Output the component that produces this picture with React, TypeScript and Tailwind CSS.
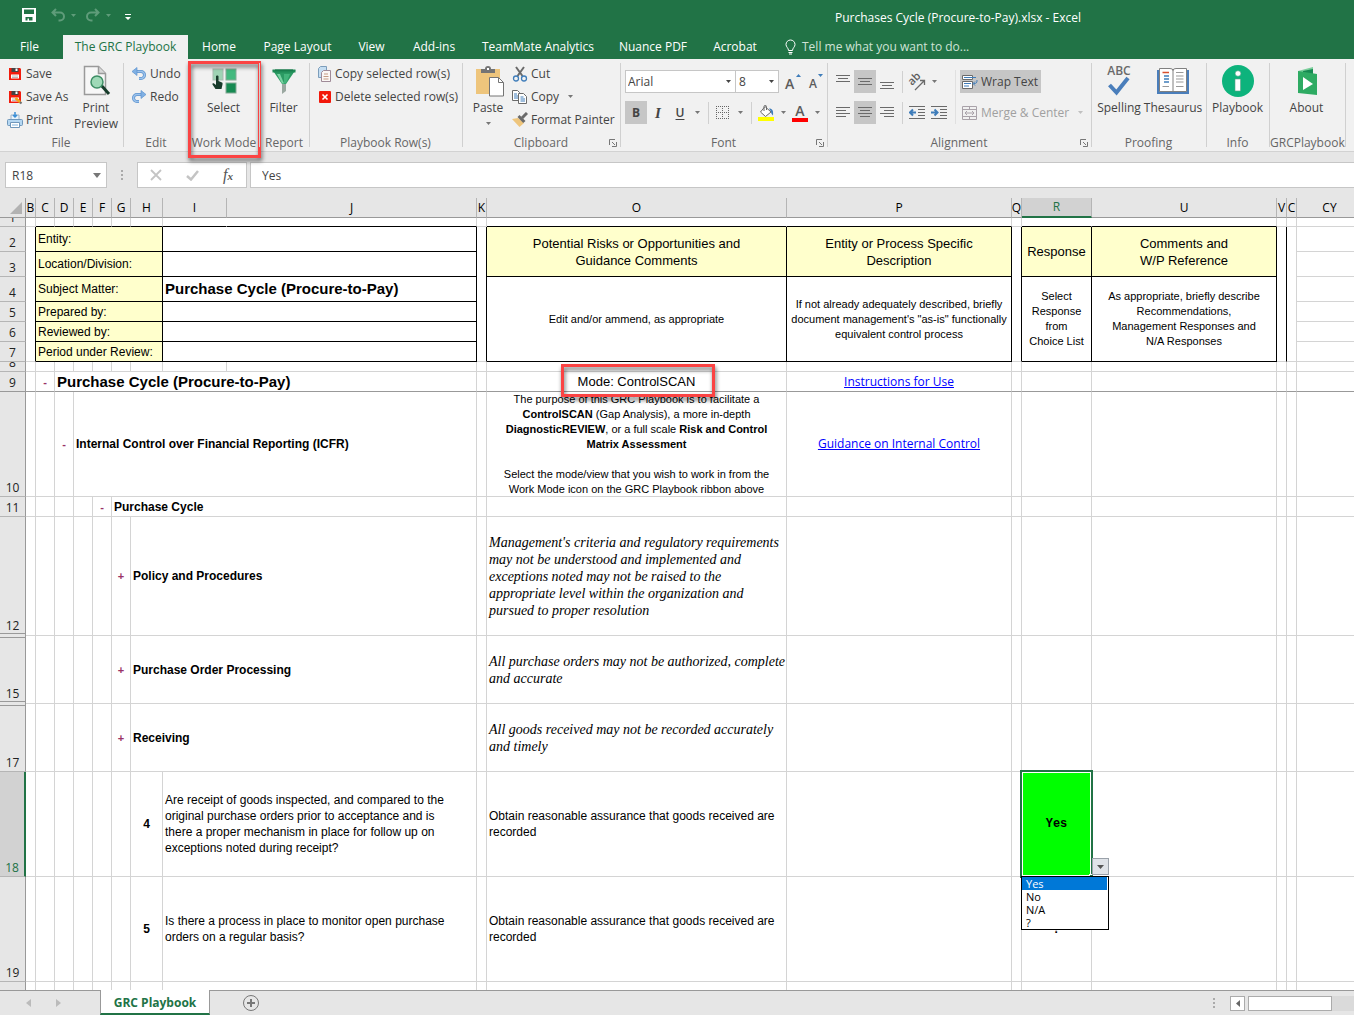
import React from 'react'

type Kids = { children?: React.ReactNode; className?: string }

const ui = "font-['Open_Sans','Noto_Sans',sans-serif]"
const line = 'border-[#d4d4d4]'
const label = 'bg-[#ffffcc]'

/* ---------- icons ---------- */

const Caret = ({ className = '' }: { className?: string }) => (
    <svg className={`shrink-0 ${className}`} width="5" height="3" viewBox="0 0 5 3" fill="currentColor"><path d="M0 0h5L2.5 3z" /></svg>
)

const Floppy = ({ edit = false }: { edit?: boolean }) => (
    <svg width="16" height="16" viewBox="0 0 16 16">
        <path d="M2 2h11l1 1v11H2z" fill="#f21c0d" />
        <path d="M4.500 2h7v4h-7z" fill="#444" />
        <path d="M8.500 2.500h2V5h-2z" fill="#fff" />
        <path d="M4 8.500h8v4H4z" fill="#fff" />
        <path d="M5 10h6M5 11.500h6" stroke="#bbb" />
        {edit && <path d="M8.500 9l5 4.500" stroke="#f6a21d" strokeWidth="2.500" />}
        {edit && <path d="M13 13l1.500 1.500" stroke="#6c6c6c" strokeWidth="2" />}
    </svg>
)

const Printer = () => (
    <svg width="16" height="16" viewBox="0 0 16 16">
        <path d="M4 3h8v5H4z" fill="#e8f3fb" stroke="#9fb4c7" />
        <path d="M8 0v5M6 3l2 2 2-2" stroke="#3b8fd6" fill="none" strokeWidth="1.500" />
        <rect x=".5" y="7.500" width="15" height="6" rx="1" fill="#b5d7f2" stroke="#6f97bb" />
        <path d="M3.500 10.500h9v5h-9z" fill="#fff" stroke="#6f97bb" />
        <path d="M5 13h6" stroke="#7fb2dd" />
    </svg>
)

const PrintPreview = () => (
    <svg width="32" height="32" viewBox="0 0 32 32">
        <path d="M4.500 1.500h14l7 7v21h-21z" fill="#f7f7f7" stroke="#9a9a9a" strokeWidth="1.500" />
        <path d="M18.500 1.500v7h7" fill="#d8d8d8" stroke="#9a9a9a" strokeWidth="1.500" />
        <path d="M21 20l8 9" stroke="#173c2b" strokeWidth="3" />
        <circle cx="17" cy="17" r="6" fill="#9fd9b7" stroke="#3d8e65" strokeWidth="1.500" />
    </svg>
)

const Swoop = ({ flip = false }: { flip?: boolean }) => (
    <svg width="16" height="16" viewBox="0 0 16 16" fill="none" className={flip ? '-scale-x-100' : ''}>
        <path d="M4 5.500h6a3.500 3.500 0 0 1 0 7H8" stroke="#5e93cf" strokeWidth="3" />
        <path d="M4 5.500h6a3.500 3.500 0 0 1 0 7H8" stroke="#9cc3ec" strokeWidth="1.500" />
        <path d="M6 1.500L1 5.500l5 4z" fill="#7fb0e4" stroke="#5e93cf" strokeWidth=".7" />
    </svg>
)

const SelectMode = () => (
    <svg width="32" height="32" viewBox="0 0 32 32">
        <rect x="5" y="4" width="10" height="11" fill="#9fd3b4" stroke="#a9b9b0" />
        <rect x="18" y="4" width="10" height="11" fill="#42b97e" stroke="#84aa95" />
        <rect x="18" y="18" width="10" height="10" fill="#168a52" stroke="#84aa95" />
        <path d="M8 11.500c0-1.200 2.500-1.200 2.500 0V16l3.500 1.500c.6.300.7 1 .5 2L13.500 24h-6L4.500 19.500c-.5-1 .7-1.800 1.600-1L8 20z" fill="#183b2b" />
    </svg>
)

const Funnel = () => (
    <svg width="32" height="32" viewBox="0 0 32 32">
        <path d="M14 18h4v8l-4 3z" fill="#9ba8a1" />
        <path d="M4.500 5L14 19h4l9.500-14z" fill="#2b9a63" />
        <path d="M9 9l5 9.500h2L12 9z" fill="#7ad3a3" />
        <path d="M16 9v9.500h2L22 9z" fill="#43b47b" />
        <path d="M4.500 4.500h23v3h-23z" fill="#1f8a56" />
        <path d="M7 5h18" stroke="#147044" />
    </svg>
)

const CopyRows = () => (
    <svg width="14" height="16" viewBox="0 0 14 16">
        <path d="M.500 2.500l2-2h6v11h-8z" fill="#c5def2" stroke="#7c9dbb" />
        <path d="M3.500 6.500l2-2h7v11h-9z" fill="#fbf7f5" stroke="#9f8b98" />
        <path d="M6 8h4M5.500 10.500h5M5.500 13h5" stroke="#c39b83" />
    </svg>
)

const DeleteRows = () => (
    <svg width="14" height="14" viewBox="0 0 14 14">
        <rect x="1" y="1" width="12" height="12" rx="1" fill="#f2180a" />
        <path d="M4.500 4.500l5 5M9.500 4.500l-5 5" stroke="#fff" strokeWidth="1.600" />
    </svg>
)

const PasteIcon = () => (
    <svg width="32" height="32" viewBox="0 0 32 32">
        <rect x="4" y="4" width="24" height="25" fill="#eec57c" />
        <path d="M9 4h4a3 3 0 0 1 6 0h4v4H9z" fill="#747474" />
        <rect x="15" y="3" width="2" height="2" fill="#fff" />
        <path d="M17.500 12.500h9l5 5v13.500h-14z" fill="#fff" stroke="#747474" />
        <path d="M26.500 12.500v5h5" fill="none" stroke="#747474" />
    </svg>
)

const Cut = () => (
    <svg width="16" height="16" viewBox="0 0 16 16" fill="none">
        <path d="M4 1l6.500 9M12 1L5.500 10" stroke="#6a6a6a" strokeWidth="2" />
        <circle cx="4" cy="12.500" r="2.500" stroke="#3f7dba" strokeWidth="1.300" />
        <circle cx="12" cy="12.500" r="2.500" stroke="#3f7dba" strokeWidth="1.300" />
    </svg>
)

const Copy = () => (
    <svg width="16" height="16" viewBox="0 0 16 16">
        <path d="M.500 1.500h5l2 2v8h-7z" fill="#fff" stroke="#6a6a6a" />
        <path d="M2 5h3M2 7h4M2 9h4" stroke="#3f7dba" />
        <path d="M6.500 4.500h5l3 3v7h-8z" fill="#fff" stroke="#6a6a6a" />
        <path d="M8.500 8h3M8.500 10h4.500M8.500 12h4.500" stroke="#3f7dba" />
    </svg>
)

const Painter = () => (
    <svg width="16" height="16" viewBox="0 0 16 16">
        <path d="M0 7l6-1 6 5-4.500 4z" fill="#eec57c" />
        <path d="M5.500 5l2-2 6 6-2.300 2z" fill="#6a6a6a" />
        <path d="M10 6l5-5" stroke="#6a6a6a" strokeWidth="3" />
    </svg>
)

const GrowFont = ({ down = false }: { down?: boolean }) => (
    <span className="relative flex h-[23px] w-[22px] items-center pl-[2px] text-[#5c5c5c]">
        <span className={`mt-1 font-semibold ${down ? 'pl-[2px] text-[12px]' : 'text-[14px]'}`}>A</span>
        <svg className="absolute top-1 right-[4px]" width="5" height="3" viewBox="0 0 5 3" fill="#3f7dba"><path d={down ? 'M0 0h5L2.500 3z' : 'M0 3h5L2.500 0z'} /></svg>
    </span>
)

const BordersIcon = () => (
    <svg width="14" height="14" viewBox="0 0 14 14" fill="none" stroke="#666" strokeDasharray="1 1">
        <path d="M0 .500h13M0 6.500h13M0 12.500h13M.500 0v13M6.500 0v13M12.500 0v13" />
    </svg>
)

const Bucket = () => (
    <svg width="16" height="16" viewBox="0 0 16 16">
        <path d="M7 1.500l6 5.500-5.500 4.500L2.500 7z" fill="#fff" stroke="#6a6a6a" />
        <path d="M6 6V1.500c0-1.500 2.500-1.500 2.500 0V5" fill="none" stroke="#6a6a6a" />
        <path d="M11 3.500c3.500 0 4.500 2 4 7-1.500-1-2-3-2-4z" fill="#3f7dba" />
        <path d="M0 12h16v4H0z" fill="#ffff00" />
    </svg>
)

const FontColor = () => (
    <span className="flex h-[19px] w-4 flex-col items-center border-b-4 border-[#ff0000] text-[14px] leading-[15px] font-semibold text-[#5c5c5c]">A</span>
)

const Lines = ({ d }: { d: string }) => (
    <svg width="14" height="14" viewBox="0 0 14 14" fill="none" stroke="#6a6a6a"><path d={d} /></svg>
)

const Orientation = () => (
    <svg width="18" height="18" viewBox="0 0 18 18" className="overflow-visible">
        <text x="4" y="13" fontSize="11" fontFamily="Open Sans, sans-serif" fontWeight="600" fill="#5c5c5c" transform="rotate(-45 4 13)">ab</text>
        <path d="M7 17l9-9M12 7.500h4.500V12" fill="none" stroke="#6a6a6a" strokeWidth="1.300" />
    </svg>
)

const Indent = ({ right = false }: { right?: boolean }) => (
    <svg width="16" height="14" viewBox="0 0 16 14" fill="none">
        <path d="M0 .500h16M9 3.500h7M9 6.500h7M9 9.500h7M0 12.500h16" stroke="#6a6a6a" />
        <path d={right ? 'M0 6.500h6M3.500 3.500l3 3-3 3' : 'M1 6.500h6M4 3.500l-3 3 3 3'} stroke="#3f7dba" strokeWidth="2" />
    </svg>
)

const Wrap = () => (
    <svg width="16" height="16" viewBox="0 0 16 16" fill="none">
        <path d="M.500 1.500h10v4H.500z" fill="#fff" stroke="#6a6a6a" />
        <path d="M2 3.500h12" stroke="#3f7dba" />
        <path d="M.500 7.500h10v7H.500z" fill="#fff" stroke="#6a6a6a" />
        <path d="M2 9.500h7M2 12h5" stroke="#3f7dba" />
        <path d="M15 6c0 3-.5 3.500-3.500 3.500M13 7.500l-2 2 2 2" stroke="#3f7dba" />
    </svg>
)

const Merge = () => (
    <svg width="16" height="16" viewBox="0 0 16 16" fill="none" stroke="#a9a2a9">
        <path d="M.500 1.500h14v13H.500zM.500 4.500h14M.500 11.500h14M7.500 1.500v3M7.500 11.500v3M3 8h9M5 6L3 8l2 2M10 6l2 2-2 2" />
    </svg>
)

const Spelling = () => (
    <span className="flex h-8 flex-col items-center text-[12px] leading-[11px] font-semibold text-[#6a6a6a]">
        ABC
        <svg width="22" height="20" viewBox="0 0 22 20"><path d="M1.500 9l7 7.500L20 2" fill="none" stroke="#4a7ebb" strokeWidth="4" /></svg>
    </span>
)

const Thesaurus = () => (
    <svg width="32" height="32" viewBox="0 0 32 32" fill="none">
        <path d="M0 5h2v20h28V5h2v24H0z" fill="#4a7ebb" />
        <path d="M2.500 3.500H13q3 0 3 2 0-2 3-2h10.500v23H2.500z" fill="#fff" stroke="#808080" />
        <path d="M16 5v21" stroke="#808080" />
        <path d="M5.500 7.500H12" stroke="#d8502e" strokeWidth="1.500" />
        <path d="M7 11h5M7 14h5M7 17h5" stroke="#3f7dba" strokeWidth="1.300" />
        <path d="M5.500 21.500H12M19 7.500h7.500M19 11h7.500M19 14h7.500M19 17h7.500M19 21.500h7.500" stroke="#999" />
    </svg>
)

const InfoIcon = () => (
    <svg width="32" height="32" viewBox="0 0 32 32">
        <circle cx="16" cy="16" r="16" fill="#0db37c" />
        <circle cx="16" cy="8.500" r="2.800" fill="#fff" stroke="#5f9f86" strokeWidth=".6" />
        <path d="M13 14h5.500v12H13z" fill="#fff" stroke="#5f9f86" strokeWidth=".6" />
    </svg>
)

const AboutIcon = () => (
    <svg width="32" height="32" viewBox="0 0 32 32">
        <path d="M7 6l15-4v7H7z" fill="#7ccf9c" />
        <path d="M12 6l10-2v5H12z" fill="#178a52" />
        <path d="M7 6l19 3v21L7 28z" fill="#2eab63" />
        <path d="M12 12v13l10-6z" fill="#fff" />
    </svg>
)

/* ---------- ribbon parts ---------- */

const Group: React.FC<Kids & { name: string; launcher?: boolean }> = ({ name, launcher, className = '', children }) => (
    <section className={`relative flex shrink-0 flex-col pt-[3px] ${className}`}>
        <div className="flex h-[73px] items-start">{children}</div>
        <div className="pr-[2px] text-center leading-4 whitespace-nowrap text-[#666]">{name}</div>
        {launcher && (
            <button aria-label={`${name} settings`} className="absolute right-1 bottom-1">
                <svg width="8" height="8" viewBox="0 0 8 8" fill="none" stroke="#777"><path d="M.500 6V.500H6M3 3l3 3M7.500 3v4.500H3" /></svg>
            </button>
        )}
        <span className="absolute top-1 right-0 h-[84px] w-px bg-[#d0d0d0]" />
    </section>
)

const Small: React.FC<Kids & { icon: React.ReactNode }> = ({ icon, children, className = '' }) => (
    <button className={`flex h-[23px] items-center gap-[3px] whitespace-nowrap ${className}`}>
        {icon}
        {children}
    </button>
)

const Large: React.FC<Kids & { icon: React.ReactNode }> = ({ icon, children, className = '' }) => (
    <button className={`flex flex-col items-center pt-[3px] leading-4 ${className}`}>
        <span className="mb-[3px]">{icon}</span>
        {children}
    </button>
)

const Tool: React.FC<Kids & { name: string; on?: boolean }> = ({ name, on, children }) => (
    <button aria-label={name} className={`flex h-[23px] w-[22px] shrink-0 items-center justify-center ${on ? 'bg-[#c6c6c6]' : ''}`}>{children}</button>
)

const More = ({ name }: { name: string }) => (
    <button aria-label={name} className="flex h-[23px] w-3 items-center justify-center text-[#777]"><Caret /></button>
)

const Rule = () => <span className="h-[22px] w-px bg-[#d0d0d0]" />

const tabs = [
    ['Home', 'w-[62px]'],
    ['Page Layout', 'w-[95px]'],
    ['View', 'w-[53px]'],
    ['Add-ins', 'w-[72px]'],
    ['TeamMate Analytics', 'w-[136px]'],
    ['Nuance PDF', 'w-[94px]'],
    ['Acrobat', 'w-[70px]'],
]

const TitleBar = () => (
    <header className="bg-[#217346] text-white">
        <div className="flex h-[35px] items-center">
            <div className="flex w-[562px] items-center pb-[5px] pl-[22px] text-[#5f9c7a]">
                <button aria-label="Save workbook">
                    <svg width="14" height="14" viewBox="0 0 14 14"><path fillRule="evenodd" d="M0 0h14v14H0zM2 1.500v4.500h10V1.500zM3.500 9v3.500h2V10.500h1.500v2h3.500V9z" fill="#fff" /></svg>
                </button>
                <button aria-label="Undo last" className="ml-[15px]">
                    <svg width="14" height="14" viewBox="0 0 14 14" fill="none" stroke="#5f9c7a" strokeWidth="2"><path d="M5 1L1.500 4.500 5 8M2 4.500h7a4 4 0 0 1 0 8H7.500" /></svg>
                </button>
                <Caret className="ml-[6px]" />
                <button aria-label="Redo last" className="ml-[10px] -scale-x-100">
                    <svg width="14" height="14" viewBox="0 0 14 14" fill="none" stroke="#5f9c7a" strokeWidth="2"><path d="M5 1L1.500 4.500 5 8M2 4.500h7a4 4 0 0 1 0 8H7.500" /></svg>
                </button>
                <Caret className="ml-[6px]" />
                <button aria-label="Customize toolbar" className="mt-1 ml-[14px]">
                    <svg width="6" height="7" viewBox="0 0 6 7" fill="#fff"><path d="M0 0h6v1H0zM0 3h6L3 6z" /></svg>
                </button>
            </div>
            <h1 className="flex-1 text-center">Purchases Cycle (Procure-to-Pay).xlsx - Excel</h1>
        </div>
        <nav className="flex h-6 items-center whitespace-nowrap">
            <button className="w-[63px] pr-1">File</button>
            <button className="h-6 w-[125px] bg-[#f1f1f1] text-[#217346]">The GRC Playbook</button>
            {tabs.map(([name, width]) => (
                <button key={name} className={width}>{name}</button>
            ))}
            <button className="ml-[14px] flex items-center gap-[5px] text-[#cfe3d7]">
                <svg width="13" height="16" viewBox="0 0 13 16" fill="none" stroke="#fff"><path d="M4.500 11.500C4.500 9 2 8 2 5.500a4.500 4.500 0 0 1 9 0c0 2.500-2.500 3.500-2.500 6zM4.500 13.500h4M5 15h3" /></svg>
                Tell me what you want to do...
            </button>
        </nav>
    </header>
)

const Ribbon = () => (
    <div className="relative z-20 flex h-[93px] border-b border-[#d2d2d2] bg-[#f1f1f1] text-[#444]">
        <Group name="File" className="w-[124px]">
            <div className="ml-[7px] flex w-[66px] flex-col">
                <Small icon={<Floppy />}>Save</Small>
                <Small icon={<Floppy edit />}>Save As</Small>
                <Small icon={<Printer />}>Print</Small>
            </div>
            <Large icon={<PrintPreview />} className="w-[46px]">Print<br />Preview</Large>
        </Group>
        <Group name="Edit" className="w-[66px]">
            <div className="ml-[7px] flex flex-col">
                <Small icon={<Swoop />}>Undo</Small>
                <Small icon={<Swoop flip />}>Redo</Small>
            </div>
        </Group>
        <Group name="Work Mode" className="w-[70px]">
            <Large icon={<SelectMode />} className="w-full pr-[3px]">Select</Large>
            <span className="pointer-events-none absolute top-[2px] -right-[1px] -left-[2px] h-[97px] border-[3px] border-[#fb4343] drop-shadow-[1px_3px_2px_rgba(0,0,0,0.6)]" />
        </Group>
        <Group name="Report" className="w-[50px]">
            <Large icon={<Funnel />} className="w-full pr-[3px]">Filter</Large>
        </Group>
        <Group name="Playbook Row(s)" className="w-[153px]">
            <div className="ml-2 flex flex-col">
                <Small icon={<CopyRows />}>Copy selected row(s)</Small>
                <Small icon={<DeleteRows />}>Delete selected row(s)</Small>
            </div>
        </Group>
        <Group name="Clipboard" launcher className="w-[158px]">
            <Large icon={<PasteIcon />} className="ml-[9px] w-8">Paste<Caret className="mt-[6px] text-[#777]" /></Large>
            <div className="ml-2 flex flex-col">
                <Small icon={<Cut />}>Cut</Small>
                <Small icon={<Copy />}>Copy<Caret className="ml-[6px] text-[#777]" /></Small>
                <Small icon={<Painter />}>Format Painter</Small>
            </div>
        </Group>
        <Group name="Font" launcher className="w-[207px]">
            <div className="ml-1 flex flex-col gap-2 pt-2">
                <div className="flex items-center">
                    <div className="relative flex items-center">
                        <select aria-label="Font" className="h-[23px] w-[111px] appearance-none border border-[#c6c6c6] bg-white pl-[2px]"><option>Arial</option></select>
                        <Caret className="pointer-events-none absolute right-[5px]" />
                    </div>
                    <div className="relative flex items-center">
                        <select aria-label="Font size" className="h-[23px] w-[43px] appearance-none border border-l-0 border-[#c6c6c6] bg-white pl-[3px]"><option>8</option></select>
                        <Caret className="pointer-events-none absolute right-[5px]" />
                    </div>
                    <span className="flex pl-1">
                        <Tool name="Increase font size"><GrowFont /></Tool>
                        <Tool name="Decrease font size"><GrowFont down /></Tool>
                    </span>
                </div>
                <div className="flex items-center">
                    <Tool name="Bold" on><b>B</b></Tool>
                    <Tool name="Italic"><i className="font-['Liberation_Serif',serif] text-[15px] font-bold">I</i></Tool>
                    <Tool name="Underline"><u className="font-semibold underline-offset-2">U</u></Tool>
                    <More name="Underline style" />
                    <span className="flex items-center pr-[3px] pl-[5px]"><Rule /></span>
                    <Tool name="Borders"><BordersIcon /></Tool>
                    <More name="Border style" />
                    <span className="flex items-center pr-[3px] pl-[5px]"><Rule /></span>
                    <Tool name="Fill colour"><Bucket /></Tool>
                    <More name="Fill colours" />
                    <Tool name="Font colour"><FontColor /></Tool>
                    <More name="Font colours" />
                </div>
            </div>
        </Group>
        <Group name="Alignment" launcher className="w-[264px]">
            <div className="ml-1 flex flex-col gap-2 pt-2">
                <div className="flex items-center">
                    <Tool name="Top align"><Lines d="M0 .500h14M2 3.500h10M0 6.500h14" /></Tool>
                    <Tool name="Middle align" on><Lines d="M0 3.500h14M2 6.500h10M0 9.500h14" /></Tool>
                    <Tool name="Bottom align"><Lines d="M0 7.500h14M2 10.500h10M0 13.500h14" /></Tool>
                    <span className="flex items-center pr-[3px] pl-1"><Rule /></span>
                    <Tool name="Orientation"><Orientation /></Tool>
                    <More name="Orientations" />
                </div>
                <div className="flex items-center">
                    <Tool name="Align left"><Lines d="M0 1.500h14M0 4.500h10M0 7.500h14M0 10.500h10" /></Tool>
                    <Tool name="Center" on><Lines d="M0 1.500h14M2 4.500h10M0 7.500h14M2 10.500h10" /></Tool>
                    <Tool name="Align right"><Lines d="M0 1.500h14M4 4.500h10M0 7.500h14M4 10.500h10" /></Tool>
                    <span className="flex items-center pr-[3px] pl-1"><Rule /></span>
                    <Tool name="Decrease indent"><Indent /></Tool>
                    <Tool name="Increase indent"><Indent right /></Tool>
                </div>
            </div>
            <span className="mt-2 ml-[5px] h-[54px] w-px bg-[#e0e0e0]" />
            <div className="ml-1 flex flex-col items-start gap-2 pt-2">
                <Small icon={<Wrap />} className="bg-[#c6c6c6] pr-[3px] pl-[2px]">Wrap Text</Small>
                <Small icon={<Merge />} className="pl-[2px] text-[#a0a0a0]">Merge &amp; Center<Caret className="ml-[6px] text-[#c0c0c0]" /></Small>
            </div>
        </Group>
        <Group name="Proofing" className="w-[115px]">
            <Large icon={<Spelling />} className="w-[54px]">Spelling</Large>
            <Large icon={<Thesaurus />} className="w-[54px]">Thesaurus</Large>
        </Group>
        <Group name="Info" className="w-[63px]">
            <Large icon={<InfoIcon />} className="w-full pr-[2px]">Playbook</Large>
        </Group>
        <Group name="GRCPlaybook" className="w-[76px]">
            <Large icon={<AboutIcon />} className="w-full pr-[3px]">About</Large>
        </Group>
    </div>
)

const FormulaBar = () => (
    <div className="flex h-[46px] items-start bg-[#e6e6e6] pt-[10px] pl-[5px] text-[#444]">
        <div className="relative flex items-center">
            <input aria-label="Name box" defaultValue="R18" className="h-[26px] w-[102px] border border-[#c6c6c6] bg-white px-[6px]" />
            <svg className="absolute right-[6px]" width="8" height="5" viewBox="0 0 8 5" fill="#777"><path d="M0 0h8L4 5z" /></svg>
        </div>
        <svg className="mt-2 ml-[14px]" width="2" height="11" viewBox="0 0 2 11" fill="#aaa"><path d="M0 0h2v2H0zM0 4h2v2H0zM0 8h2v2H0z" /></svg>
        <div className="ml-[14px] flex h-[26px] w-[110px] items-center border border-[#c6c6c6] bg-white">
            <button aria-label="Cancel" className="flex w-9 justify-center"><svg width="12" height="12" viewBox="0 0 12 12" stroke="#c4c4c4" strokeWidth="1.800"><path d="M1 1l10 10M11 1L1 11" /></svg></button>
            <button aria-label="Enter" className="flex w-9 justify-center"><svg width="13" height="11" viewBox="0 0 13 11" fill="none" stroke="#c4c4c4" strokeWidth="2.500"><path d="M1 6l4 3.500L12 1" /></svg></button>
            <button aria-label="Insert function" className="w-9 text-center font-['Liberation_Serif',serif] text-[16px] leading-4 text-[#555] italic">f<b className="text-[11px]">x</b></button>
        </div>
        <input aria-label="Formula" defaultValue="Yes" className="ml-[3px] h-[26px] min-w-0 flex-1 border border-r-0 border-[#c6c6c6] bg-white px-[11px]" />
    </div>
)

/* ---------- sheet parts ---------- */

const cols = [
    ['B', 'w-[10px]'], ['C', 'w-[19px]'], ['D', 'w-[19px]'], ['E', 'w-[19px]'], ['F', 'w-[19px]'], ['G', 'w-[19px]'],
    ['H', 'w-[32px]'], ['I', 'w-[64px]'], ['J', 'w-[250px]'], ['K', 'w-[10px]'], ['O', 'w-[300px]'], ['P', 'w-[225px]'],
    ['Q', 'w-[10px]'], ['R', 'w-[70px]'], ['U', 'w-[185px]'], ['V', 'w-[10px]'], ['C', 'w-[10px]'], ['CY', ''],
]

const Cell: React.FC<Kids & { span?: number; rows?: number }> = ({ span, rows, className = '', children }) => (
    <td colSpan={span} rowSpan={rows} className={`border-r border-b p-0 last:border-r-0 ${/border-(r-|b-|)(black|\[)/.test(className) ? '' : line} ${className}`}>{children}</td>
)

const Head: React.FC<{ n: string; h: string; dark?: boolean; on?: boolean; top?: boolean; bottom?: boolean }> = ({ n, h, on, dark, top, bottom }) => (
    <th scope="row" className={`p-0 align-bottom font-normal ${on ? 'border-r-2 border-r-[#217346] bg-[#d2d2d2] text-[#217346]' : 'border-r border-r-[#999] bg-[#e6e6e6] text-[#222]'} ${bottom ? '' : dark ? 'border-b border-b-[#999]' : 'border-b border-b-[#b5b5b5]'}`}>
        <div className={`flex flex-col overflow-hidden ${h}`}>
            {top && <span className="h-[2px] shrink-0 border-b border-[#999]" />}
            <span className={`flex min-h-0 flex-1 items-end justify-center ${bottom ? 'leading-[14px]' : 'leading-[17px]'}`}>{n}</span>
            {bottom && <span className="h-[3px] shrink-0 border-t border-[#999]" />}
        </div>
    </th>
)

const Blank = ({ n, className = '' }: { n: number; className?: string }) => (
    <>{Array.from({ length: n }, (_, i) => <Cell key={i} className={className} />)}</>
)

/* Q to CY, plain */
const Tail = ({ className = '' }: { className?: string }) => <Blank n={6} className={className} />

const Toggle = ({ open }: { open?: boolean }) => (
    <button className="block w-full text-center text-[11px] leading-4 font-bold text-[#993366]">{open ? '-' : '+'}</button>
)

const info = [
    ['2', 'Entity:', 'h-6'],
    ['3', 'Location/Division:', 'h-6'],
    ['4', 'Subject Matter:', 'h-6'],
    ['5', 'Prepared by:', 'h-[19px]'],
    ['6', 'Reviewed by:', 'h-[19px]'],
    ['7', 'Period under Review:', 'h-[19px]'],
]

const headCell = `${label} border-black text-center text-[13px] leading-[17px]`
const noteCell = 'border-black text-center text-[11px] leading-[15px]'
const risk = "pl-[2px] text-left font-['Liberation_Serif',serif] text-[14px] leading-[17px] italic"

const areas = [
    { n: '12', h: 'h-[119px]', name: 'Policy and Procedures', bottom: true, text: ["Management's criteria and regulatory requirements", 'may not be understood and implemented and', 'exceptions noted may not be raised to the', 'appropriate level within the organization and', 'pursued to proper resolution'] },
    { n: '15', h: 'h-[68px]', name: 'Purchase Order Processing', top: true, bottom: true, text: ['All purchase orders may not be authorized, complete', 'and accurate'] },
    { n: '17', h: 'h-[67px]', name: 'Receiving', top: true, text: ['All goods received may not be recorded accurately', 'and timely'] },
]

const Stack = ({ text }: { text: string[] }) => (
    <>{text.map((t) => <span key={t} className="block whitespace-nowrap">{t}</span>)}</>
)

const Answer = () => (
    <div className="relative flex h-[104px] items-center justify-center bg-[#00ff00] font-['Liberation_Mono',monospace] text-[12px] font-bold">
        Yes
        <span className="pointer-events-none absolute -top-[2px] -right-[2px] -bottom-[2px] -left-[2px] border-2 border-[#217346]">
            <span className="block h-full border border-white" />
        </span>
        <span className="absolute -right-[2px] -bottom-[2px] h-1 w-1 border-t border-l border-white bg-[#217346]" />
        <button aria-label="Choose response" className="absolute bottom-px left-full ml-px flex h-[17px] w-[17px] items-center justify-center border border-[#9aa1a9] bg-[#dfe3e8] text-[#555]">
            <svg width="7" height="4" viewBox="0 0 7 4" fill="currentColor"><path d="M0 0h7L3.500 4z" /></svg>
        </button>
        <ul role="listbox" aria-label="Response" className={`absolute top-full -left-px z-10 w-[88px] border border-black bg-white text-left text-[11px] leading-[13px] font-normal ${ui}`}>
            <li role="option" aria-selected="true" className="mr-px bg-[#0078d7] pl-1 text-white">Yes</li>
            <li role="option" aria-selected="false" className="pl-1">No</li>
            <li role="option" aria-selected="false" className="pl-1">N/A</li>
            <li role="option" aria-selected="false" className="pl-1">?</li>
        </ul>
    </div>
)

const Sheet = () => (
    <table className="w-full table-fixed border-separate border-spacing-0 bg-white font-['Liberation_Sans',Arial,sans-serif] text-[12px] leading-4 text-black">
        <colgroup>
            <col className="w-[26px]" />
            {cols.map(([name, w], i) => <col key={name + i} className={w} />)}
        </colgroup>
        <thead className={ui}>
            <tr className="h-5 bg-[#e6e6e6]">
                <th className="border-r border-b border-[#999] p-0">
                    <svg className="mr-[3px] ml-auto" width="12" height="12" viewBox="0 0 12 12" fill="#b2b2b2"><path d="M12 0v12H0z" /></svg>
                </th>
                {cols.map(([name], i) => (
                    <th
                        key={name + i}
                        scope="col"
                        className={`border-r border-r-[#b5b5b5] p-0 font-normal last:border-r-0 last:pl-2 ${name === 'R' ? 'border-b-2 border-b-[#217346] bg-[#d2d2d2] text-[#217346]' : 'border-b border-b-[#999]'}`}
                    >
                        <span className="flex justify-center">{name}</span>
                    </th>
                ))}
            </tr>
        </thead>
        <tbody className={ui + " [&_td]:font-['Liberation_Sans',Arial,sans-serif]"}>
            <tr>
                <Head n="1" h="h-2" />
                <Cell />
                <Blank n={6} className="border-r-[#d4d4d4] border-b-black" />
                <Cell className="border-r-white border-b-black" />
                <Cell className="border-r-[#d4d4d4] border-b-black" />
                <Cell />
                <Cell className="border-r-white border-b-black" />
                <Cell className="border-r-[#d4d4d4] border-b-black" />
                <Cell />
                <Cell className="border-r-white border-b-black" />
                <Cell className="border-r-[#d4d4d4] border-b-black" />
                <Blank n={3} />
            </tr>
            {info.map(([n, text, h], i) => (
                <tr key={n}>
                    <Head n={n} h={h} />
                    {i === 0 && <Cell rows={6} className="border-r-black border-b-[#d4d4d4]" />}
                    <Cell span={6} className={`${label} border-black pl-[2px] whitespace-nowrap`}>{text}</Cell>
                    <Cell span={2} className="border-black pl-[2px] text-[15px] font-bold">{n === '4' && 'Purchase Cycle (Procure-to-Pay)'}</Cell>
                    {i === 0 && (
                        <>
                            <Cell rows={6} className="border-r-black border-b-[#d4d4d4]" />
                            <Cell rows={2} className={headCell}>Potential Risks or Opportunities and<br />Guidance Comments</Cell>
                            <Cell rows={2} className={headCell}>Entity or Process Specific<br />Description</Cell>
                            <Cell rows={6} className="border-r-black border-b-[#d4d4d4]" />
                            <Cell rows={2} className={headCell}>Response</Cell>
                            <Cell rows={2} className={headCell}>Comments and<br />W/P Reference</Cell>
                            <Cell rows={6} className="border-r-black border-b-[#d4d4d4]" />
                            <Cell rows={6} />
                        </>
                    )}
                    {i === 2 && (
                        <>
                            <Cell rows={4} className={noteCell}>Edit and/or ammend, as appropriate</Cell>
                            <Cell rows={4} className={noteCell}><Stack text={['If not already adequately described, briefly', 'document management\'s "as-is" functionally', 'equivalent control process']} /></Cell>
                            <Cell rows={4} className={noteCell}><Stack text={['Select', 'Response', 'from', 'Choice List']} /></Cell>
                            <Cell rows={4} className={`${noteCell} last:border-r`}><Stack text={['As appropriate, briefly describe', 'Recommendations,', 'Management Responses and', 'N/A Responses']} /></Cell>
                        </>
                    )}
                    <Cell />
                </tr>
            ))}
            <tr>
                <Head n="8" h="h-[9px]" />
                <Blank n={18} />
            </tr>
            <tr>
                <Head n="9" h="h-[19px]" dark />
                <Cell className="border-r-[#d4d4d4] border-b-[#999]" />
                <Cell className="border-r-[#d4d4d4] border-b-[#999]"><Toggle open /></Cell>
                <Cell span={7} className="border-r-[#d4d4d4] border-b-[#999] pl-[2px] text-[15px] font-bold">Purchase Cycle (Procure-to-Pay)</Cell>
                <Cell className="border-r-[#d4d4d4] border-b-[#999]" />
                <Cell className="border-r-[#d4d4d4] border-b-[#999] text-center text-[13px]">
                    <div className="relative">
                        Mode: ControlSCAN
                        <span className="pointer-events-none absolute -top-[10px] left-[74px] z-10 h-[33px] w-[154px] border-[3px] border-[#fb4343] drop-shadow-[1px_3px_2px_rgba(0,0,0,0.6)]" />
                    </div>
                </Cell>
                <Cell className="border-r-[#d4d4d4] border-b-[#999] text-center"><a href="#instructions" className={`text-[#0000ff] underline ${ui}`}>Instructions for Use</a></Cell>
                <Tail className="border-r-[#d4d4d4] border-b-[#999]" />
            </tr>
            <tr>
                <Head n="10" h="h-[104px]" />
                <Blank n={2} />
                <Cell><Toggle open /></Cell>
                <Cell span={6} className="pl-[2px] font-bold">Internal Control over Financial Reporting (ICFR)</Cell>
                <Cell />
                <Cell className="text-center text-[11px] leading-[15px]">
                    <div className="flex h-[104px] flex-col justify-center overflow-hidden">
                        <p>The purpose of this GRC Playbook is to facilitate a<br /><b>ControlSCAN</b> (Gap Analysis), a more in-depth<br /><b>DiagnosticREVIEW</b>, or a full scale <b>Risk and Control<br />Matrix Assessment</b></p>
                        <p className="mt-[15px]">Select the mode/view that you wish to work in from the<br />Work Mode icon on the GRC Playbook ribbon above</p>
                    </div>
                </Cell>
                <Cell className="text-center"><a href="#guidance" className={`text-[#0000ff] underline ${ui}`}>Guidance on Internal Control</a></Cell>
                <Tail />
            </tr>
            <tr>
                <Head n="11" h="h-[19px]" />
                <Blank n={4} />
                <Cell><Toggle open /></Cell>
                <Cell span={4} className="pl-[2px] font-bold">Purchase Cycle</Cell>
                <Blank n={3} />
                <Tail />
            </tr>
            {areas.map((a) => (
                <tr key={a.n}>
                    <Head n={a.n} h={a.h} top={a.top} bottom={a.bottom} />
                    <Blank n={5} />
                    <Cell><Toggle /></Cell>
                    <Cell span={3} className="pl-[2px] font-bold">{a.name}</Cell>
                    <Cell />
                    <Cell><p className={risk}><Stack text={a.text} /></p></Cell>
                    <Cell />
                    <Tail />
                </tr>
            ))}
            <tr>
                <Head n="18" h="h-[104px]" on />
                <Blank n={6} />
                <Cell className="text-center font-bold">4</Cell>
                <Cell span={2} className="pl-[2px]"><Stack text={['Are receipt of goods inspected, and compared to the', 'original purchase orders prior to acceptance and is', 'there a proper mechanism in place for follow up on', 'exceptions noted during receipt?']} /></Cell>
                <Cell />
                <Cell className="pl-[2px]"><Stack text={['Obtain reasonable assurance that goods received are', 'recorded']} /></Cell>
                <Blank n={2} />
                <Cell><Answer /></Cell>
                <Blank n={4} />
            </tr>
            <tr>
                <Head n="19" h="h-[104px]" />
                <Blank n={6} />
                <Cell className="text-center font-bold">5</Cell>
                <Cell span={2} className="pl-[2px]"><Stack text={['Is there a process in place to monitor open purchase', 'orders on a regular basis?']} /></Cell>
                <Cell />
                <Cell className="pl-[2px]"><Stack text={['Obtain reasonable assurance that goods received are', 'recorded']} /></Cell>
                <Blank n={2} />
                <Cell className="text-center font-bold">?</Cell>
                <Blank n={4} />
            </tr>
            <tr>
                <Head n="" h="h-5" />
                <Blank n={7} />
                <Cell span={2} />
                <Blank n={9} />
            </tr>
        </tbody>
    </table>
)

const SheetTabs = () => (
    <footer className="flex h-[25px] shrink-0 items-center border-t border-[#999] bg-[#e6e6e6]">
        <button aria-label="Previous sheet" className="ml-[26px]"><svg width="5" height="8" viewBox="0 0 5 8" fill="#bbb"><path d="M5 0v8L0 4z" /></svg></button>
        <button aria-label="Next sheet" className="ml-[25px]"><svg width="5" height="8" viewBox="0 0 5 8" fill="#bbb"><path d="M0 0v8l5-4z" /></svg></button>
        <button className="-mt-px ml-[39px] h-[25px] w-[110px] border-x border-b-2 border-x-[#999] border-b-[#217346] bg-white pt-[2px] font-bold text-[#217346]">GRC Playbook</button>
        <button aria-label="New sheet" className="ml-[33px]">
            <svg width="16" height="16" viewBox="0 0 16 16" fill="none" stroke="#777"><circle cx="8" cy="8" r="7.500" /><path d="M8 4v8M4 8h8" strokeWidth="2" /></svg>
        </button>
        <svg className="ml-auto" width="2" height="11" viewBox="0 0 2 11" fill="#aaa"><path d="M0 0h2v2H0zM0 4h2v2H0zM0 8h2v2H0z" /></svg>
        <button aria-label="Scroll left" className="mr-[3px] ml-[15px] flex h-[15px] w-[15px] items-center justify-center border border-[#ababab] bg-white">
            <svg width="4" height="7" viewBox="0 0 4 7" fill="#666"><path d="M4 0v7L0 3.500z" /></svg>
        </button>
        <div className="h-[15px] w-[106px] bg-[#dadada]"><div className="h-full w-[84px] border border-[#ababab] bg-white" /></div>
    </footer>
)

export default function App() {
    return (
        <div className={`flex h-screen flex-col overflow-hidden bg-[#e6e6e6] text-[12px] leading-4 ${ui}`}>
            <TitleBar />
            <Ribbon />
            <FormulaBar />
            <main className="min-h-0 flex-1 overflow-hidden">
                <Sheet />
            </main>
            <SheetTabs />
        </div>
    )
}
